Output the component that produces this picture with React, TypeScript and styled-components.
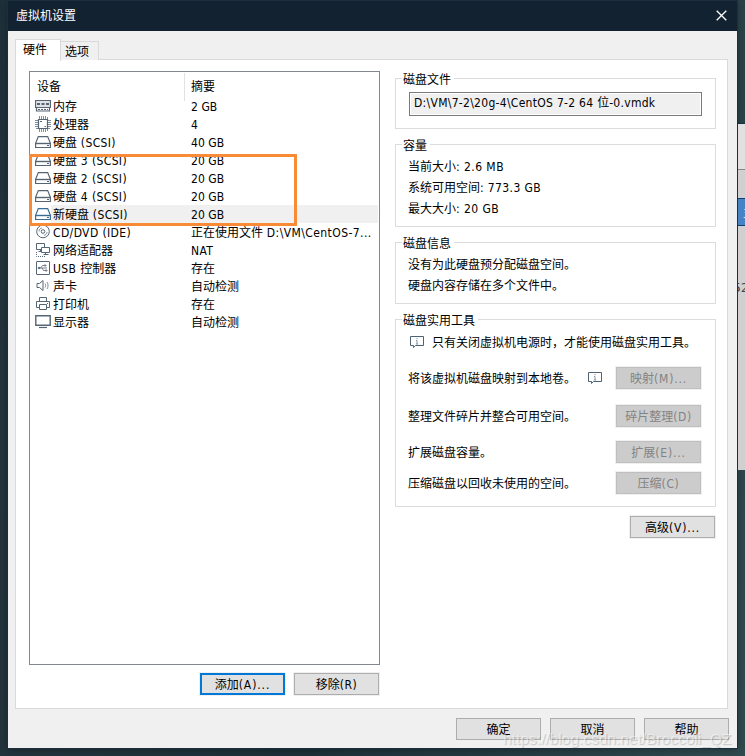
import React from 'react';
import styled, { createGlobalStyle } from 'styled-components';

const Global = createGlobalStyle`
  *, *::before, *::after { box-sizing: border-box; }
  body {
    margin: 0;
    overflow: hidden;
    font: 12px/18px 'DejaVu Sans Condensed', 'Noto Sans CJK SC', sans-serif;
    color: #000;
  }
`;

const Desktop = styled.div`
  position: relative;
  width: 745px;
  height: 756px;
  display: grid;
  grid-template-columns: 8px 729px 8px;
  background: linear-gradient(100deg, #1d303a 0%, #23343d 8%, #1c3038 50%, #2f4a4e 100%);
`;

const Window = styled.div`
  grid-column: 2;
  margin-top: 1px;
  height: 747px;
  background: #f0f0f0;
  display: flex;
  flex-direction: column;
  box-shadow: 0 0 0 1px #1c2f40, 0 1px 7px rgba(0, 0, 0, 0.35);
`;

const TitleBar = styled.header`
  height: 30px;
  flex: none;
  background: #132231;
  color: #fff;
  display: flex;
  align-items: center;
  justify-content: space-between;
  padding: 0 10px 2px 8px;
`;

const Title = styled.span`
  padding-top: 2px;
`;

const Tabs = styled.nav`
  height: 29px;
  flex: none;
  display: flex;
  align-items: flex-end;
  padding-left: 7px;
`;

const Tab = styled.div<{ $active?: boolean }>`
  position: relative;
  width: ${p => (p.$active ? 46 : 38)}px;
  height: ${p => (p.$active ? 22 : 19)}px;
  margin-bottom: ${p => (p.$active ? -1 : 0)}px;
  border: 1px solid #d9d9d9;
  border-left-width: ${p => (p.$active ? 1 : 0)}px;
  border-bottom: 0;
  background: ${p => (p.$active ? '#fff' : '#f0f0f0')};
  z-index: ${p => (p.$active ? 1 : 0)};
  padding: ${p => (p.$active ? '1px 0 0 7px' : '1px 0 0 4px')};
`;

const Panel = styled.main`
  width: 713px;
  height: 650px;
  flex: none;
  margin: -1px 0 0 7px;
  border: 1px solid #d9d9d9;
  background: #fff;
  display: flex;
  gap: 15px;
  padding: 11px 11px 0 13px;
`;

const ListColumn = styled.div`
  flex: none;
  display: flex;
  flex-direction: column;
`;

const DetailColumn = styled(ListColumn)`
  padding-top: 7px;
`;

const DeviceList = styled.div`
  position: relative;
  width: 351px;
  height: 594px;
  border: 1px solid #828790;
  padding: 1px;
`;

const ListHeader = styled.div`
  display: grid;
  grid-template-columns: 153px 1fr;
  height: 24px;
  line-height: 28px;
`;

const HeaderCell = styled.div`
  padding-left: 6px;
  & + & { border-left: 1px solid #e2e2e2; padding-left: 6px; }
`;

const Row = styled.div<{ $selected?: boolean }>`
  display: grid;
  grid-template-columns: 20px 140px 1fr;
  height: 18px;
  line-height: 20px;
  white-space: nowrap;
  background: ${p => (p.$selected ? 'linear-gradient(90deg, #fff 20px, #f0f0f0 20px)' : 'none')};
`;

const RowIcon = styled.span`
  padding: 1px 0 0 4px;
  height: 18px;
  line-height: 0;
`;

const DeviceName = styled.span`
  padding-left: 2px;
`;

const Highlight = styled.div`
  position: absolute;
  left: -1px;
  top: 82px;
  width: 268px;
  height: 72px;
  border: 3px solid #f98a36;
`;

const Latin = styled.span<{ $spacing: number }>`
  letter-spacing: ${p => p.$spacing}px;
`;

/* Widens the Latin runs of a mixed string and leaves the ideographs on their 12px grid. */
const Mixed = ({ text, spacing = 0.38 }: { text: string; spacing?: number }) => (
  <>
    {text.split(/([\x20-\x7e]+)/).map((part, i) =>
      i % 2 ? <Latin key={i} $spacing={spacing}>{part}</Latin> : part,
    )}
  </>
);

const Button = styled.button<{ $primary?: boolean }>`
  width: 85px;
  height: 22px;
  flex: none;
  padding: ${p => (p.$primary ? '1px 0 0' : '2px 0 0')};
  font: inherit;
  line-height: 18px;
  color: #000;
  background: #e1e1e1;
  border: ${p => (p.$primary ? '2px solid #0078d7' : '1px solid #adadad')};
  box-shadow: 0 0 0 1px #f0f0f0;
  white-space: nowrap;
  &:disabled {
    color: #838383;
    background: #ccc;
    border-color: #bfbfbf;
  }
`;

const ListActions = styled.div`
  display: flex;
  justify-content: flex-end;
  gap: 9px;
  margin-top: 8px;
  padding-right: 1px;
`;

const Group = styled.section<{ $height: number; $gap?: number }>`
  width: 321px;
  height: ${p => p.$height}px;
  flex: none;
  margin-bottom: ${p => p.$gap ?? 15}px;
  border: 1px solid #dcdcdc;
  padding: 0 13px 0 12px;
`;

const Legend = styled.h2`
  width: fit-content;
  height: 18px;
  margin: -9px 0 0 -6px;
  padding: 0 3px 0 1px;
  background: #fff;
  font: inherit;
  line-height: 20px;
`;

const PathField = styled.div`
  width: 293px;
  height: 24px;
  margin: 4px 0 0 1px;
  padding-left: 4px;
  border: 1px solid #7a7a7a;
  box-shadow: inset 0 0 0 1px #fff;
  background: #f0f0f0;
  line-height: 21px;
  white-space: nowrap;
`;

const Lines = styled.div`
  padding-top: 3px;
`;

const Line = styled.p`
  margin: 0;
  height: 21px;
  line-height: 21px;
`;

const Tip = styled.div`
  height: 21px;
  margin-top: 4px;
  display: flex;
  align-items: center;
  gap: 8px;
  padding: 0 0 2px 2px;
  white-space: nowrap;
`;

const Tool = styled.div<{ $before: number }>`
  width: 293px;
  height: 22px;
  margin-top: ${p => p.$before}px;
  display: flex;
  align-items: center;
  white-space: nowrap;
`;

const ToolLabel = styled.span`
  flex: 1;
  padding-top: 2px;
`;

const ToolHint = styled.span`
  line-height: 0;
  margin-right: 14px;
`;

const Advanced = styled.div`
  display: flex;
  justify-content: flex-end;
  padding-right: 1px;
`;

const Footer = styled.footer`
  display: flex;
  justify-content: flex-end;
  gap: 9px;
  padding: 9px 8px 0 0;
`;

const Behind = styled.aside`
  grid-column: 3;
  margin: 123px 0 0 1px;
  height: 347px;
  overflow: hidden;
  background: #d0d0d0;
  border-top: 1px solid #163044;
`;

const BehindBar = styled.div`
  height: 46px;
  background: #e0e0e0;
  border-bottom: 1px solid #888;
`;

const BehindTab = styled.div`
  height: 28px;
  margin-top: 28px;
  border: 1px solid #163c69;
  border-width: 1px 0;
  background: #4682c4;
  color: #dce9f7;
  line-height: 28px;
  text-indent: 5px;
  white-space: nowrap;
  overflow: hidden;
`;

const BehindText = styled.div`
  margin: 53px 0 0 -5px;
  font: 13px/18px 'DejaVu Sans Mono', monospace;
  color: #444;
  white-space: nowrap;
`;

const Watermark = styled.div`
  position: absolute;
  left: 503px;
  top: 729px;
  font: 15.5px/19px 'Liberation Sans', sans-serif;
  color: rgba(255, 255, 255, 0.5);
  text-shadow: 1px 1px 1px rgba(90, 90, 90, 0.3);
  white-space: nowrap;
  pointer-events: none;
`;

const Svg = ({ children, color = '#566573' }: { children: React.ReactNode; color?: string }) => (
  <svg width="16" height="16" viewBox="0 0 16 16" fill="none" stroke={color} strokeWidth="1">
    {children}
  </svg>
);

const MemoryIcon = () => (
  <Svg>
    <path d="M.5 2.500h15v7H.5z" fill="#dfe3e7" strokeWidth="1.200" />
    <path d="M2 5h3v2H2zM6.500 5h3v2h-3zM11 5h3v2h-3z" fill="#566573" stroke="none" />
    <path d="M1.500 9.500v3.500h13V9.500" strokeWidth="1.200" />
    <path d="M3 11.500h10" strokeDasharray="2 1" />
  </Svg>
);

const CpuIcon = () => (
  <Svg>
    <path d="M3.500 3.500h9v9h-9z" strokeWidth="1.200" />
    <path
      d="M4.500 0v3M6.500 0v3M8.500 0v3M10.500 0v3M12.500 1v2M4.500 13v3M6.500 13v3M8.500 13v3M10.500 13v3M12.500 13v2M0 4.500h3M0 6.500h3M0 8.500h3M0 10.500h3M1 12.500h2M13 4.500h3M13 6.500h3M13 8.500h3M13 10.500h3M13 12.500h2"
      strokeOpacity=".75"
    />
    <path d="M5 5.500h2M9.500 10.500H11" />
  </Svg>
);

const DiskIcon = ({ color }: { color?: string }) => (
  <Svg color={color}>
    <path d="M3.300 2.600h9.400l2.700 6.700v4.200H.6V9.300z" strokeWidth="1.200" />
    <path d="M.5 9.500h15" strokeWidth="1.400" />
    <path d="M12 11.500h2" />
  </Svg>
);

const DiscIcon = () => (
  <Svg>
    <circle cx="8" cy="7.500" r="6.300" />
    <circle cx="8" cy="7.500" r="1.800" />
    <path d="M4 7.500c0-2 1.500-3.500 3-3.500M12 8c0 1.800-1.500 3.300-3 3.300" strokeOpacity=".7" />
  </Svg>
);

const NetworkIcon = () => (
  <Svg>
    <path d="M1.500 1.500h8v6h-8zM3.500 9.500h3M5.500 7.500v2" />
    <path d="M6.500 5.500h8v5h-8z" fill="#fff" />
    <path d="M10.500 10.500v2M8.500 12.500h5" />
    <path d="M1.500 10v4.500H10" strokeDasharray="1 1" />
  </Svg>
);

const UsbIcon = () => (
  <Svg>
    <rect x="1.500" y="1.500" width="13" height="13" rx=".5" />
    <path d="M4 8h8M5.500 8l2-2.500h2M7 8l1.500 2.500h2" strokeOpacity=".8" />
    <circle cx="4" cy="8" r=".8" fill="#566573" />
    <path d="M9.500 5h1.500v1H9.500zM10.500 10H12v1h-1.500z" strokeOpacity=".8" />
  </Svg>
);

const SoundIcon = () => (
  <Svg>
    <path d="M2 5.500h2.500l3.500-3v10l-3.500-3H2z" />
    <path d="M10 5.500c.8 1 .8 3 0 4M12 4c1.400 2 1.400 5 0 7" strokeOpacity=".75" />
  </Svg>
);

const PrinterIcon = () => (
  <Svg>
    <path d="M4.500 5V1.500h7V5M4.500 11.500h-3v-6h13v6h-3" />
    <path d="M4.500 8.500h7v5h-7z" />
    <path d="M12 7.500h1" />
  </Svg>
);

const DisplayIcon = () => (
  <Svg>
    <path d="M.8 1.800h14.400v9.400H.8z" strokeWidth="1.400" />
    <path d="M4 13.500h8" strokeWidth="1.200" />
  </Svg>
);

const InfoIcon = () => (
  <svg width="14" height="13" viewBox="0 0 14 13" fill="none" stroke="#4d6272">
    <path d="M.5.500h13v9H5.500l-2 2v-2h-3z" />
    <path d="M7 2v1.200M6 4.500h1v3.500M5.800 8h2.400" stroke="#8695a2" />
  </svg>
);

const CloseIcon = () => (
  <svg width="11" height="11" viewBox="0 0 11 11" stroke="#fff" strokeWidth="1.300">
    <path d="M.7.700l9.600 9.600M10.300.700L.7 10.300" />
  </svg>
);

const devices: { icon: React.ReactNode; name: string; summary: string; selected?: boolean }[] = [
  { icon: <MemoryIcon />, name: '内存', summary: '2 GB' },
  { icon: <CpuIcon />, name: '处理器', summary: '4' },
  { icon: <DiskIcon />, name: '硬盘 (SCSI)', summary: '40 GB' },
  { icon: <DiskIcon />, name: '硬盘 3 (SCSI)', summary: '20 GB' },
  { icon: <DiskIcon />, name: '硬盘 2 (SCSI)', summary: '20 GB' },
  { icon: <DiskIcon />, name: '硬盘 4 (SCSI)', summary: '20 GB' },
  { icon: <DiskIcon color="#3c6b93" />, name: '新硬盘 (SCSI)', summary: '20 GB', selected: true },
  { icon: <DiscIcon />, name: 'CD/DVD (IDE)', summary: '正在使用文件 D:\\VM\\CentOS-7...' },
  { icon: <NetworkIcon />, name: '网络适配器', summary: 'NAT' },
  { icon: <UsbIcon />, name: 'USB 控制器', summary: '存在' },
  { icon: <SoundIcon />, name: '声卡', summary: '自动检测' },
  { icon: <PrinterIcon />, name: '打印机', summary: '存在' },
  { icon: <DisplayIcon />, name: '显示器', summary: '自动检测' },
];

const tools = [
  { label: '将该虚拟机磁盘映射到本地卷。', button: '映射(M)...', before: 13, hint: true },
  { label: '整理文件碎片并整合可用空间。', button: '碎片整理(D)', before: 16 },
  { label: '扩展磁盘容量。', button: '扩展(E)...', before: 14 },
  { label: '压缩磁盘以回收未使用的空间。', button: '压缩(C)', before: 9 },
];

export default function App() {
  return (
    <>
      <Global />
      <Desktop>
        <Window>
          <TitleBar>
            <Title>虚拟机设置</Title>
            <CloseIcon />
          </TitleBar>
          <Tabs>
            <Tab $active>硬件</Tab>
            <Tab>选项</Tab>
          </Tabs>
          <Panel>
            <ListColumn>
              <DeviceList>
                <ListHeader>
                  <HeaderCell>设备</HeaderCell>
                  <HeaderCell>摘要</HeaderCell>
                </ListHeader>
                {devices.map(d => (
                  <Row key={d.name} $selected={d.selected}>
                    <RowIcon>{d.icon}</RowIcon>
                    <DeviceName><Mixed text={d.name} /></DeviceName>
                    <span><Mixed text={d.summary} spacing={d.summary.endsWith('GB') ? 0.05 : 0.42} /></span>
                  </Row>
                ))}
                <Highlight />
              </DeviceList>
              <ListActions>
                <Button $primary><Mixed text="添加(A)..." spacing={0.9} /></Button>
                <Button><Mixed text="移除(R)" spacing={0.6} /></Button>
              </ListActions>
            </ListColumn>
            <DetailColumn>
              <Group $height={51}>
                <Legend>磁盘文件</Legend>
                <PathField><Mixed text="D:\VM\7-2\20g-4\CentOS 7-2 64 位-0.vmdk" spacing={0.29} /></PathField>
              </Group>
              <Group $height={83}>
                <Legend>容量</Legend>
                <Lines>
                  <Line><Mixed text="当前大小: 2.6 MB" spacing={0.45} /></Line>
                  <Line><Mixed text="系统可用空间: 773.3 GB" spacing={0.38} /></Line>
                  <Line><Mixed text="最大大小: 20 GB" spacing={0.45} /></Line>
                </Lines>
              </Group>
              <Group $height={62}>
                <Legend>磁盘信息</Legend>
                <Lines>
                  <Line>没有为此硬盘预分配磁盘空间。</Line>
                  <Line>硬盘内容存储在多个文件中。</Line>
                </Lines>
              </Group>
              <Group $height={188} $gap={9}>
                <Legend>磁盘实用工具</Legend>
                <Tip>
                  <InfoIcon />
                  <span>只有关闭虚拟机电源时，才能使用磁盘实用工具。</span>
                </Tip>
                {tools.map(t => (
                  <Tool key={t.label} $before={t.before}>
                    <ToolLabel>{t.label}</ToolLabel>
                    {t.hint && <ToolHint><InfoIcon /></ToolHint>}
                    <Button disabled>
                      <Mixed text={t.button} spacing={t.button.endsWith('.') ? 0.85 : 0.6} />
                    </Button>
                  </Tool>
                ))}
              </Group>
              <Advanced>
                <Button><Mixed text="高级(V)..." spacing={0.85} /></Button>
              </Advanced>
            </DetailColumn>
          </Panel>
          <Footer>
            <Button>确定</Button>
            <Button>取消</Button>
            <Button>帮助</Button>
          </Footer>
        </Window>
        <Behind>
          <BehindBar />
          <BehindTab>主</BehindTab>
          <BehindText>52</BehindText>
        </Behind>
        <Watermark>https://blog.csdn.net/Broccoli_QZ</Watermark>
      </Desktop>
    </>
  );
}
